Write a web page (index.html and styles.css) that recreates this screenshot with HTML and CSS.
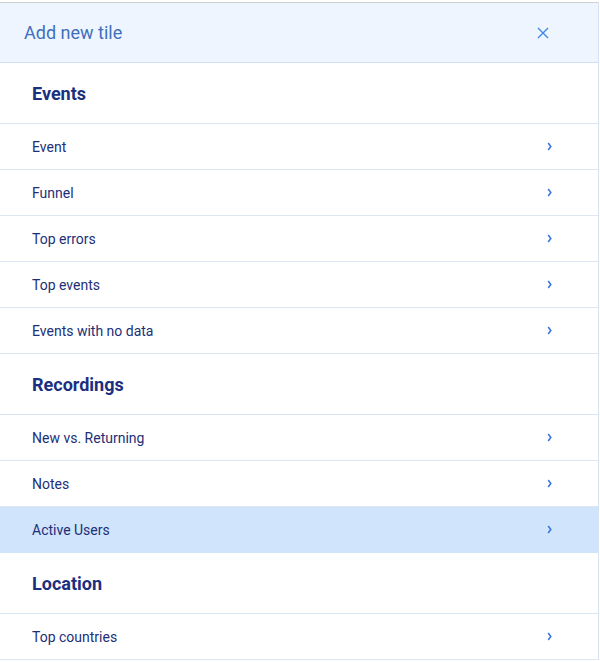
FILE: index.html
```html
<!DOCTYPE html>
<html lang="en">
<head>
  <meta charset="UTF-8" />
  <meta name="viewport" content="width=device-width, initial-scale=1.0" />
  <title>Add new tile</title>
  <link rel="stylesheet" href="styles.css">
</head>
<body>
  <div class="tile-panel">
    <div class="panel-header">
      <span class="panel-title">Add new tile</span>
      <button class="close-btn" aria-label="Close">
        <svg width="12" height="12" viewBox="0 0 12 12"><path d="M1 1 L11 11 M11 1 L1 11" stroke="#3d87e8" stroke-width="1.4" fill="none"/></svg>
      </button>
    </div>

    <div class="section-title">Events</div>
    <div class="tile-row">Event <svg class="chev" viewBox="0 0 5 9"><path d="M1.2 1 L3.8 4.5 L1.2 8"/></svg></div>
    <div class="tile-row">Funnel <svg class="chev" viewBox="0 0 5 9"><path d="M1.2 1 L3.8 4.5 L1.2 8"/></svg></div>
    <div class="tile-row">Top errors <svg class="chev" viewBox="0 0 5 9"><path d="M1.2 1 L3.8 4.5 L1.2 8"/></svg></div>
    <div class="tile-row">Top events <svg class="chev" viewBox="0 0 5 9"><path d="M1.2 1 L3.8 4.5 L1.2 8"/></svg></div>
    <div class="tile-row">Events with no data <svg class="chev" viewBox="0 0 5 9"><path d="M1.2 1 L3.8 4.5 L1.2 8"/></svg></div>

    <div class="section-title">Recordings</div>
    <div class="tile-row">New vs. Returning <svg class="chev" viewBox="0 0 5 9"><path d="M1.2 1 L3.8 4.5 L1.2 8"/></svg></div>
    <div class="tile-row">Notes <svg class="chev" viewBox="0 0 5 9"><path d="M1.2 1 L3.8 4.5 L1.2 8"/></svg></div>
    <div class="tile-row active">Active Users <svg class="chev" viewBox="0 0 5 9"><path d="M1.2 1 L3.8 4.5 L1.2 8"/></svg></div>

    <div class="section-title">Location</div>
    <div class="tile-row">Top countries <svg class="chev" viewBox="0 0 5 9"><path d="M1.2 1 L3.8 4.5 L1.2 8"/></svg></div>
  </div>
</body>
</html>
```

FILE: styles.css
```css
body {
  font-family: Roboto, "Noto Sans", Arial, sans-serif;
  background-color: #ffffff;
  margin: 0;
  padding: 2px 0 0 0;
}
.tile-panel {
  width: 598px;
  border-top: 1px solid #cfcfcf;
  border-right: 1px solid #d5e3f4;
}
.panel-header {
  display: flex;
  align-items: center;
  justify-content: space-between;
  height: 59px;
  padding: 0 49px 0 24px;
  background-color: #eef5ff;
  border-bottom: 1px solid #cfe0f5;
}
.panel-title {
  font-size: 18px;
  color: #3f6fbd;
}
.close-btn {
  border: none;
  background: none;
  padding: 0;
  width: 12px;
  height: 12px;
  display: flex;
  cursor: pointer;
}
.section-title {
  height: 61px;
  box-sizing: border-box;
  display: flex;
  align-items: center;
  padding-left: 32px;
  font-size: 18px;
  font-weight: bold;
  color: #1b2f80;
  border-bottom: 1px solid #d8e5f3;
}
.tile-row {
  height: 46px;
  box-sizing: border-box;
  display: flex;
  align-items: center;
  justify-content: space-between;
  padding: 0 46px 0 32px;
  font-size: 14px;
  color: #1c2f78;
  border-bottom: 1px solid #dde6f1;
}
.tile-row.active {
  background-color: #d0e4fb;
  border-bottom-color: #d0e4fb;
}
.chev {
  width: 5px;
  height: 9px;
  fill: none;
  stroke: #3b78dc;
  stroke-width: 1.6;
}
```
